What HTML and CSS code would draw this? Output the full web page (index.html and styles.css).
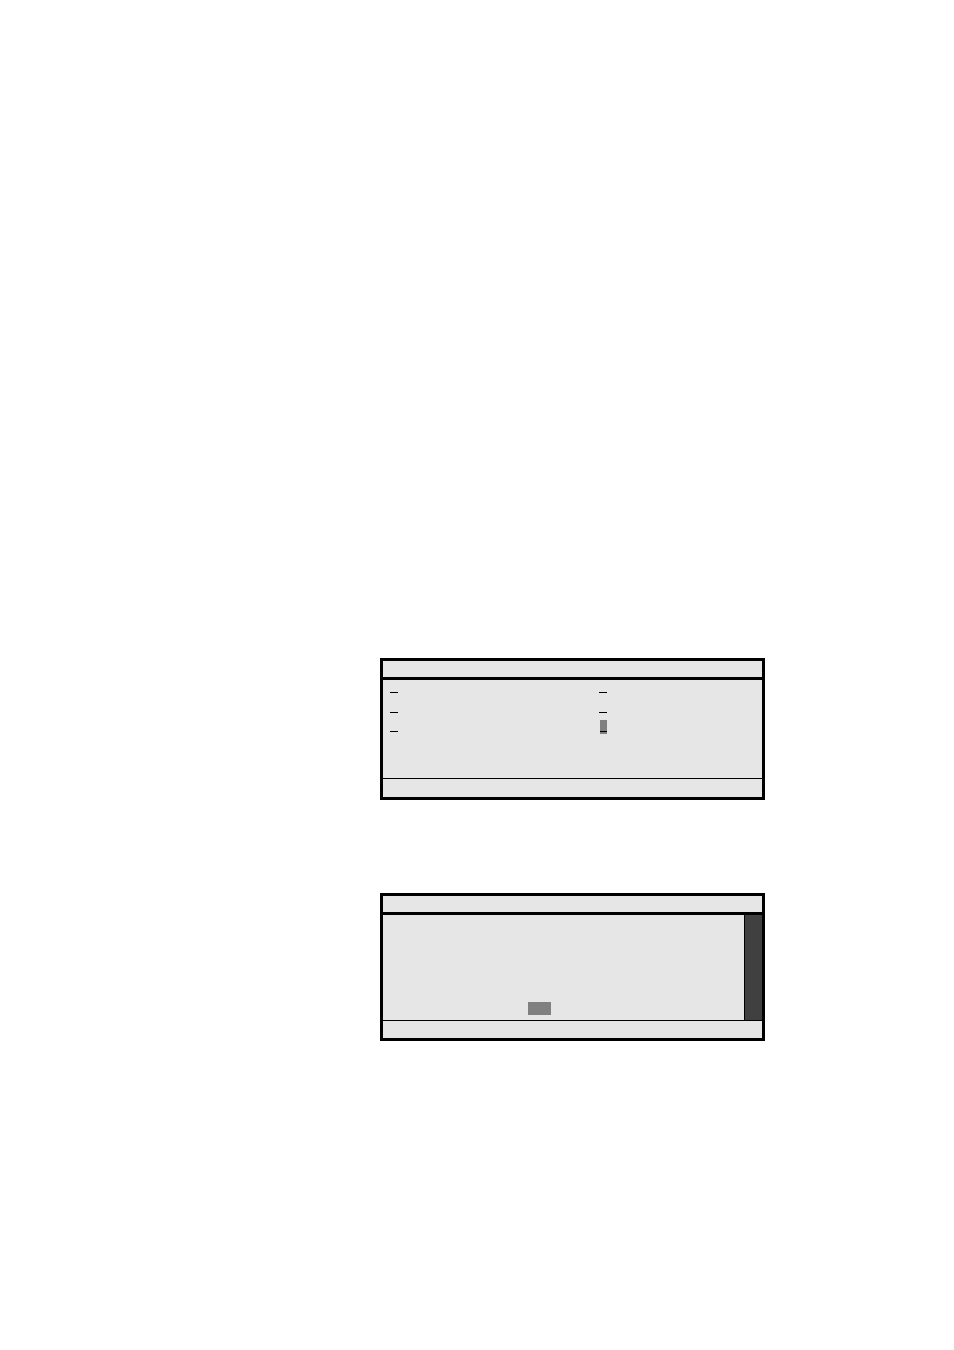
FILE: index.html
```html
<!DOCTYPE html>
<html lang="en">
<head>
<meta charset="utf-8">
<meta name="viewport" content="width=device-width, initial-scale=1">
<link rel="stylesheet" href="styles.css">
</head>
<body>
<main class="page">
  <section class="panel">
    <header class="panel-header"></header>
    <div class="panel-body keys">
      <span class="key"></span>
      <span class="key"></span>
      <span class="key"></span>
      <span class="key"></span>
      <span class="key"></span>
      <span class="key key-selected"></span>
    </div>
    <footer class="panel-footer"></footer>
  </section>
  <section class="panel">
    <header class="panel-header"></header>
    <div class="panel-body list">
      <div class="list-content"><span class="cursor"></span></div>
      <div class="scroll-track"></div>
    </div>
    <footer class="panel-footer panel-footer-short"></footer>
  </section>
</main>
</body>
</html>
```

FILE: styles.css
```css
* {
  box-sizing: border-box;
}

body {
  margin: 0;
  background: #fff;
  font-family: "Liberation Sans", sans-serif;
}

.page {
  display: flex;
  flex-direction: column;
  gap: 93px;
  min-height: 100vh;
  padding: 658px 189px 0 380px;
}

.panel {
  border: 3px solid #000;
  background: #e6e6e6;
}

.panel-header {
  height: 19px;
  border-bottom: 3px solid #000;
}

.panel-footer {
  height: 19px;
  border-top: 1px solid #000;
}

.panel-footer-short {
  height: 18px;
}

/* Two columns of underlined shortcut keys */
.keys {
  display: grid;
  grid-template-columns: 209px 1fr;
  grid-template-rows: 13px 20px 19px;
  align-items: end;
  padding: 0 7px 46px;
}

.key {
  width: 8px;
  border-bottom: 1px solid #000;
}

.key-selected {
  display: flex;
  flex-direction: column;
  justify-content: flex-end;
  width: 7px;
  height: 14px;
  margin: 0 0 -2px 1px;
  padding-bottom: 2px;
  border: 0;
  background: #808080;
}

.key-selected::after {
  content: "";
  border-bottom: 1px solid #000;
}

.list {
  display: flex;
  height: 105px;
}

.list-content {
  display: flex;
  flex: 1;
  align-items: flex-end;
  padding: 0 0 5px 145px;
}

.cursor {
  width: 23px;
  height: 13px;
  background: #808080;
}

.scroll-track {
  width: 18px;
  border-left: 1px solid #000;
  background: #404040;
}
```
